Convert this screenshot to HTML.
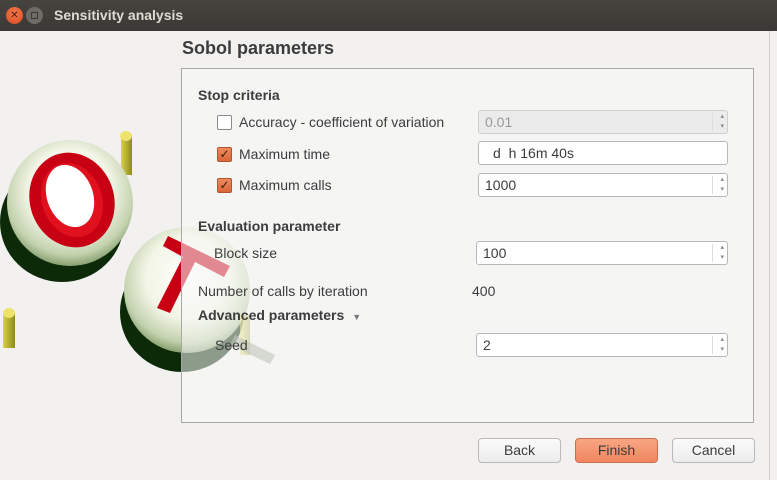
<!DOCTYPE html>
<html><head><meta charset="utf-8"><style>
*{box-sizing:border-box;margin:0;padding:0}
body{width:777px;height:480px;overflow:hidden;background:#f2f1f0;font-family:"Liberation Sans","DejaVu Sans",sans-serif;font-size:14px;color:#3c3c3c;position:relative}
.abs{position:absolute}
.tb{left:0;top:0;width:777px;height:31px;background:linear-gradient(#45443f,#3a3935);color:#dfdbd2;font-weight:bold;font-size:14px}
.panel{left:181px;top:68px;width:573px;height:355px;border:1px solid #a8a8a8;background:rgba(248,248,248,0.55)}
.b{font-weight:bold}
.cb{width:15px;height:15px;border:1px solid #8a8a8a;border-radius:2px;background:#fff}
.cb.on{background:linear-gradient(#f08a5d,#d9663a);border-color:#b0552e}
.inp{height:24px;border:1px solid #b8b8b8;border-radius:3px;background:#fff;padding:4px 6px;font-size:14px;line-height:15px}
.sp::after{content:"";position:absolute;right:0;top:2px;bottom:2px;width:14px;border-left:1px solid #ddd}
.sp::before{content:"▴\A▾";white-space:pre;position:absolute;right:3px;top:1px;font-size:7px;line-height:10px;color:#888}
.btn{top:438px;width:83px;height:25px;border:1px solid #b9b9b9;border-radius:4px;background:linear-gradient(#fbfbfb,#ececec);text-align:center;line-height:23px;font-size:14px}
</style></head><body>
<div class="abs tb">
<div class="abs" style="left:6px;top:7px;width:17px;height:17px;border-radius:50%;background:radial-gradient(circle at 50% 35%,#f37a4e,#d84a1f);color:#4a1a08;font-size:10px;text-align:center;line-height:17px">✕</div>
<div class="abs" style="left:26px;top:7px;width:17px;height:17px;border-radius:50%;background:#6c6b66"><div class="abs" style="left:5px;top:5px;width:7px;height:7px;border:1px solid #3a3935"></div></div>
<div class="abs" style="left:54px;top:7px">Sensitivity analysis</div>
</div>
<div class="abs" style="left:769px;top:31px;width:1px;height:449px;background:#d0cfcc"></div>
<svg class="abs" style="left:0;top:31px" width="300" height="380" viewBox="0 31 300 380">
<defs>
<radialGradient id="s" cx="0.5" cy="0.4" r="0.6"><stop offset="0" stop-color="#ffffff"/><stop offset="0.55" stop-color="#f2f5e6"/><stop offset="0.85" stop-color="#c3d2ae"/><stop offset="1" stop-color="#88a070"/></radialGradient>
<linearGradient id="y" x1="0" x2="1"><stop offset="0" stop-color="#d9d24a"/><stop offset="1" stop-color="#8e8a1d"/></linearGradient>
</defs>
<ellipse cx="62" cy="222" rx="62" ry="60" fill="#0c2a08"/>
<rect x="121" y="135" width="11" height="40" fill="url(#y)"/><ellipse cx="126" cy="136" rx="6" ry="5" fill="#eee36a"/>
<circle cx="70" cy="203" r="63" fill="url(#s)"/>
<ellipse cx="72" cy="200" rx="42" ry="48" fill="#c80014" transform="rotate(-20 72 200)"/>
<ellipse cx="72" cy="200" rx="30" ry="38" fill="#e0101c" transform="rotate(-20 72 200)"/>
<ellipse cx="70" cy="196" rx="23" ry="32" fill="#fff" transform="rotate(-20 70 196)"/>
<ellipse cx="182" cy="312" rx="62" ry="60" fill="#0c2a08"/>
<rect x="3" y="312" width="12" height="36" fill="url(#y)"/><ellipse cx="9" cy="313" rx="6" ry="5" fill="#eee36a"/>
<circle cx="187" cy="290" r="63" fill="url(#s)"/>
<path d="M168 236 L230 266 L224 277 L195 262 L170 313 L157 308 L183 257 L163 246Z" fill="#c80014"/>
<rect x="240" y="315" width="10" height="40" fill="url(#y)" opacity="0.6"/>
<path d="M235 335 L275 355 L270 364 L230 345Z" fill="#7a8a70" opacity="0.6"/>
</svg>
<div class="abs b" style="left:182px;top:38px;font-size:18px">Sobol parameters</div>
<div class="abs panel"></div>
<div class="abs b" style="left:198px;top:87px">Stop criteria</div>
<div class="abs cb" style="left:217px;top:115px"></div>
<div class="abs" style="left:239px;top:114px">Accuracy - coefficient of variation</div>
<div class="abs inp sp" style="left:478px;top:110px;width:250px;background:#ebebeb;color:#999;border-color:#cfcfcf">0.01</div>
<div class="abs cb on" style="left:217px;top:147px;color:#3a1a0a;font-size:12px;line-height:13px;text-align:center">✓</div>
<div class="abs" style="left:239px;top:146px">Maximum time</div>
<div class="abs inp" style="left:478px;top:141px;width:250px;padding-left:14px">d &nbsp;h 16m 40s</div>
<div class="abs cb on" style="left:217px;top:178px;color:#3a1a0a;font-size:12px;line-height:13px;text-align:center">✓</div>
<div class="abs" style="left:239px;top:177px">Maximum calls</div>
<div class="abs inp sp" style="left:478px;top:173px;width:250px">1000</div>
<div class="abs b" style="left:198px;top:218px">Evaluation parameter</div>
<div class="abs" style="left:214px;top:245px">Block size</div>
<div class="abs inp sp" style="left:476px;top:241px;width:252px">100</div>
<div class="abs" style="left:198px;top:283px">Number of calls by iteration</div>
<div class="abs" style="left:472px;top:283px">400</div>
<div class="abs b" style="left:198px;top:307px">Advanced parameters <span style="font-size:9px;color:#777;font-weight:normal;margin-left:4px">▼</span></div>
<div class="abs" style="left:215px;top:337px">Seed</div>
<div class="abs inp sp" style="left:476px;top:333px;width:252px">2</div>
<div class="abs btn" style="left:478px">Back</div>
<div class="abs btn" style="left:575px;background:linear-gradient(#f9a583,#f08660);border-color:#c8704d">Finish</div>
<div class="abs btn" style="left:672px">Cancel</div>
</body></html>
